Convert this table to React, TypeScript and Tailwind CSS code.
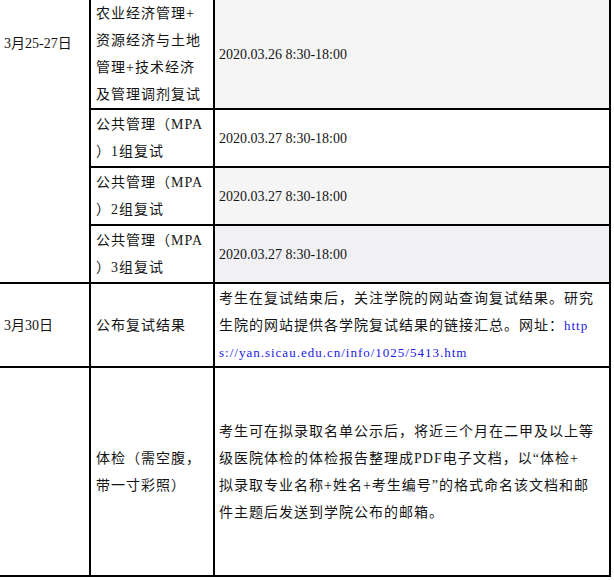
import React from 'react';

// 复试日程表的一行
interface ScheduleRow {
	item: React.ReactNode;
	detail: React.ReactNode;
	height: string;
	shade: string;
}

// 所有单元格共用的右/下边框
const cell = 'border-r-2 border-b-2 border-black p-0';

// 拉丁字母与数字用 Times 宽度，中文回落到 Noto CJK
const font = "font-['Liberation_Serif','Noto_Sans_CJK_SC',serif]";

const Latin: React.FC<{ children: React.ReactNode; className?: string }> = ({ children, className = 'text-[13px]' }) => (
	<span className={`tracking-[1px] ${className}`}>{children}</span>
);

// 公共管理（MPA）分组复试
const mpaGroup = (n: string) => (
	<>
		公共管理（<Latin className="text-[14px]">MPA</Latin>
		<br />）<Latin className="text-[14px]">{n}</Latin>组复试
	</>
);

const interviewRows: ScheduleRow[] = [
	{
		item: (
			<>
				农业经济管理+<br />资源经济与土地<br />管理+技术经济<br />及管理调剂复试
			</>
		),
		detail: '2020.03.26 8:30-18:00',
		height: 'h-[110px]',
		shade: 'bg-[#f5f5f5]',
	},
	{ item: mpaGroup('1'), detail: '2020.03.27 8:30-18:00', height: 'h-[58px]', shade: 'bg-white' },
	{ item: mpaGroup('2'), detail: '2020.03.27 8:30-18:00', height: 'h-[58px]', shade: 'bg-[#f5f5f5]' },
	{ item: mpaGroup('3'), detail: '2020.03.27 8:30-18:00', height: 'h-[58px]', shade: 'bg-[#f0f0f5]' },
];

export default function App() {
	return (
		<div className={`bg-white w-[614px] h-[580px] overflow-hidden text-[#141414] ${font}`}>
			<table className="table-fixed border-separate border-spacing-0 w-[611px]">
				<colgroup>
					<col className="w-[91px]" />
					<col className="w-[124px]" />
					<col className="w-[396px]" />
				</colgroup>
				<tbody>
					{/* --- 3月25-27日 的四场复试 --- */}
					{interviewRows.map((row, i) => (
						<tr key={i}>
							{i === 0 && (
								<td rowSpan={4} className={`${cell} align-top pl-1 pt-[30px] text-[14px] leading-[27px]`}>
									3月25-27日
								</td>
							)}
							<td className={`${cell} ${row.height} pl-[5px] text-[14px] leading-[27px] tracking-[1px]`}>
								{row.item}
							</td>
							<td className={`${cell} ${row.height} ${row.shade} pl-1 text-[14px] leading-[27px]`}>
								{row.detail}
							</td>
						</tr>
					))}

					{/* --- 公布结果 --- */}
					<tr>
						<td className={`${cell} h-[84px] pl-1 text-[14px]`}>3月30日</td>
						<td className={`${cell} h-[84px] pl-[5px] text-[14px] tracking-[1px]`}>公布复试结果</td>
						<td className={`${cell} h-[84px] pl-1 text-[14px] leading-[27px] tracking-[1px]`}>
							考生在复试结束后，关注学院的网站查询复试结果。研究
							<br />
							生院的网站提供各学院复试结果的链接汇总。网址：
							<a href="#" className="text-[#2020e8]">
								<Latin>http</Latin>
								<br />
								<Latin>s://yan.sicau.edu.cn/info/1025/5413.htm</Latin>
							</a>
						</td>
					</tr>

					{/* --- 体检 --- */}
					<tr>
						<td className={`${cell} h-[209px]`}></td>
						<td className={`${cell} h-[209px] pl-[5px] text-[14px] leading-[27px] tracking-[1px]`}>
							体检（需空腹，
							<br />
							带一寸彩照）
						</td>
						<td className={`${cell} h-[209px] pl-1 text-[14px] leading-[27px] tracking-[1px]`}>
							考生可在拟录取名单公示后，将近三个月在二甲及以上等
							<br />
							级医院体检的体检报告整理成<Latin className="text-[14px]">PDF</Latin>电子文档，以“体检+
							<br />
							拟录取专业名称+姓名+考生编号”的格式命名该文档和邮
							<br />
							件主题后发送到学院公布的邮箱。
						</td>
					</tr>
				</tbody>
			</table>
		</div>
	);
}
